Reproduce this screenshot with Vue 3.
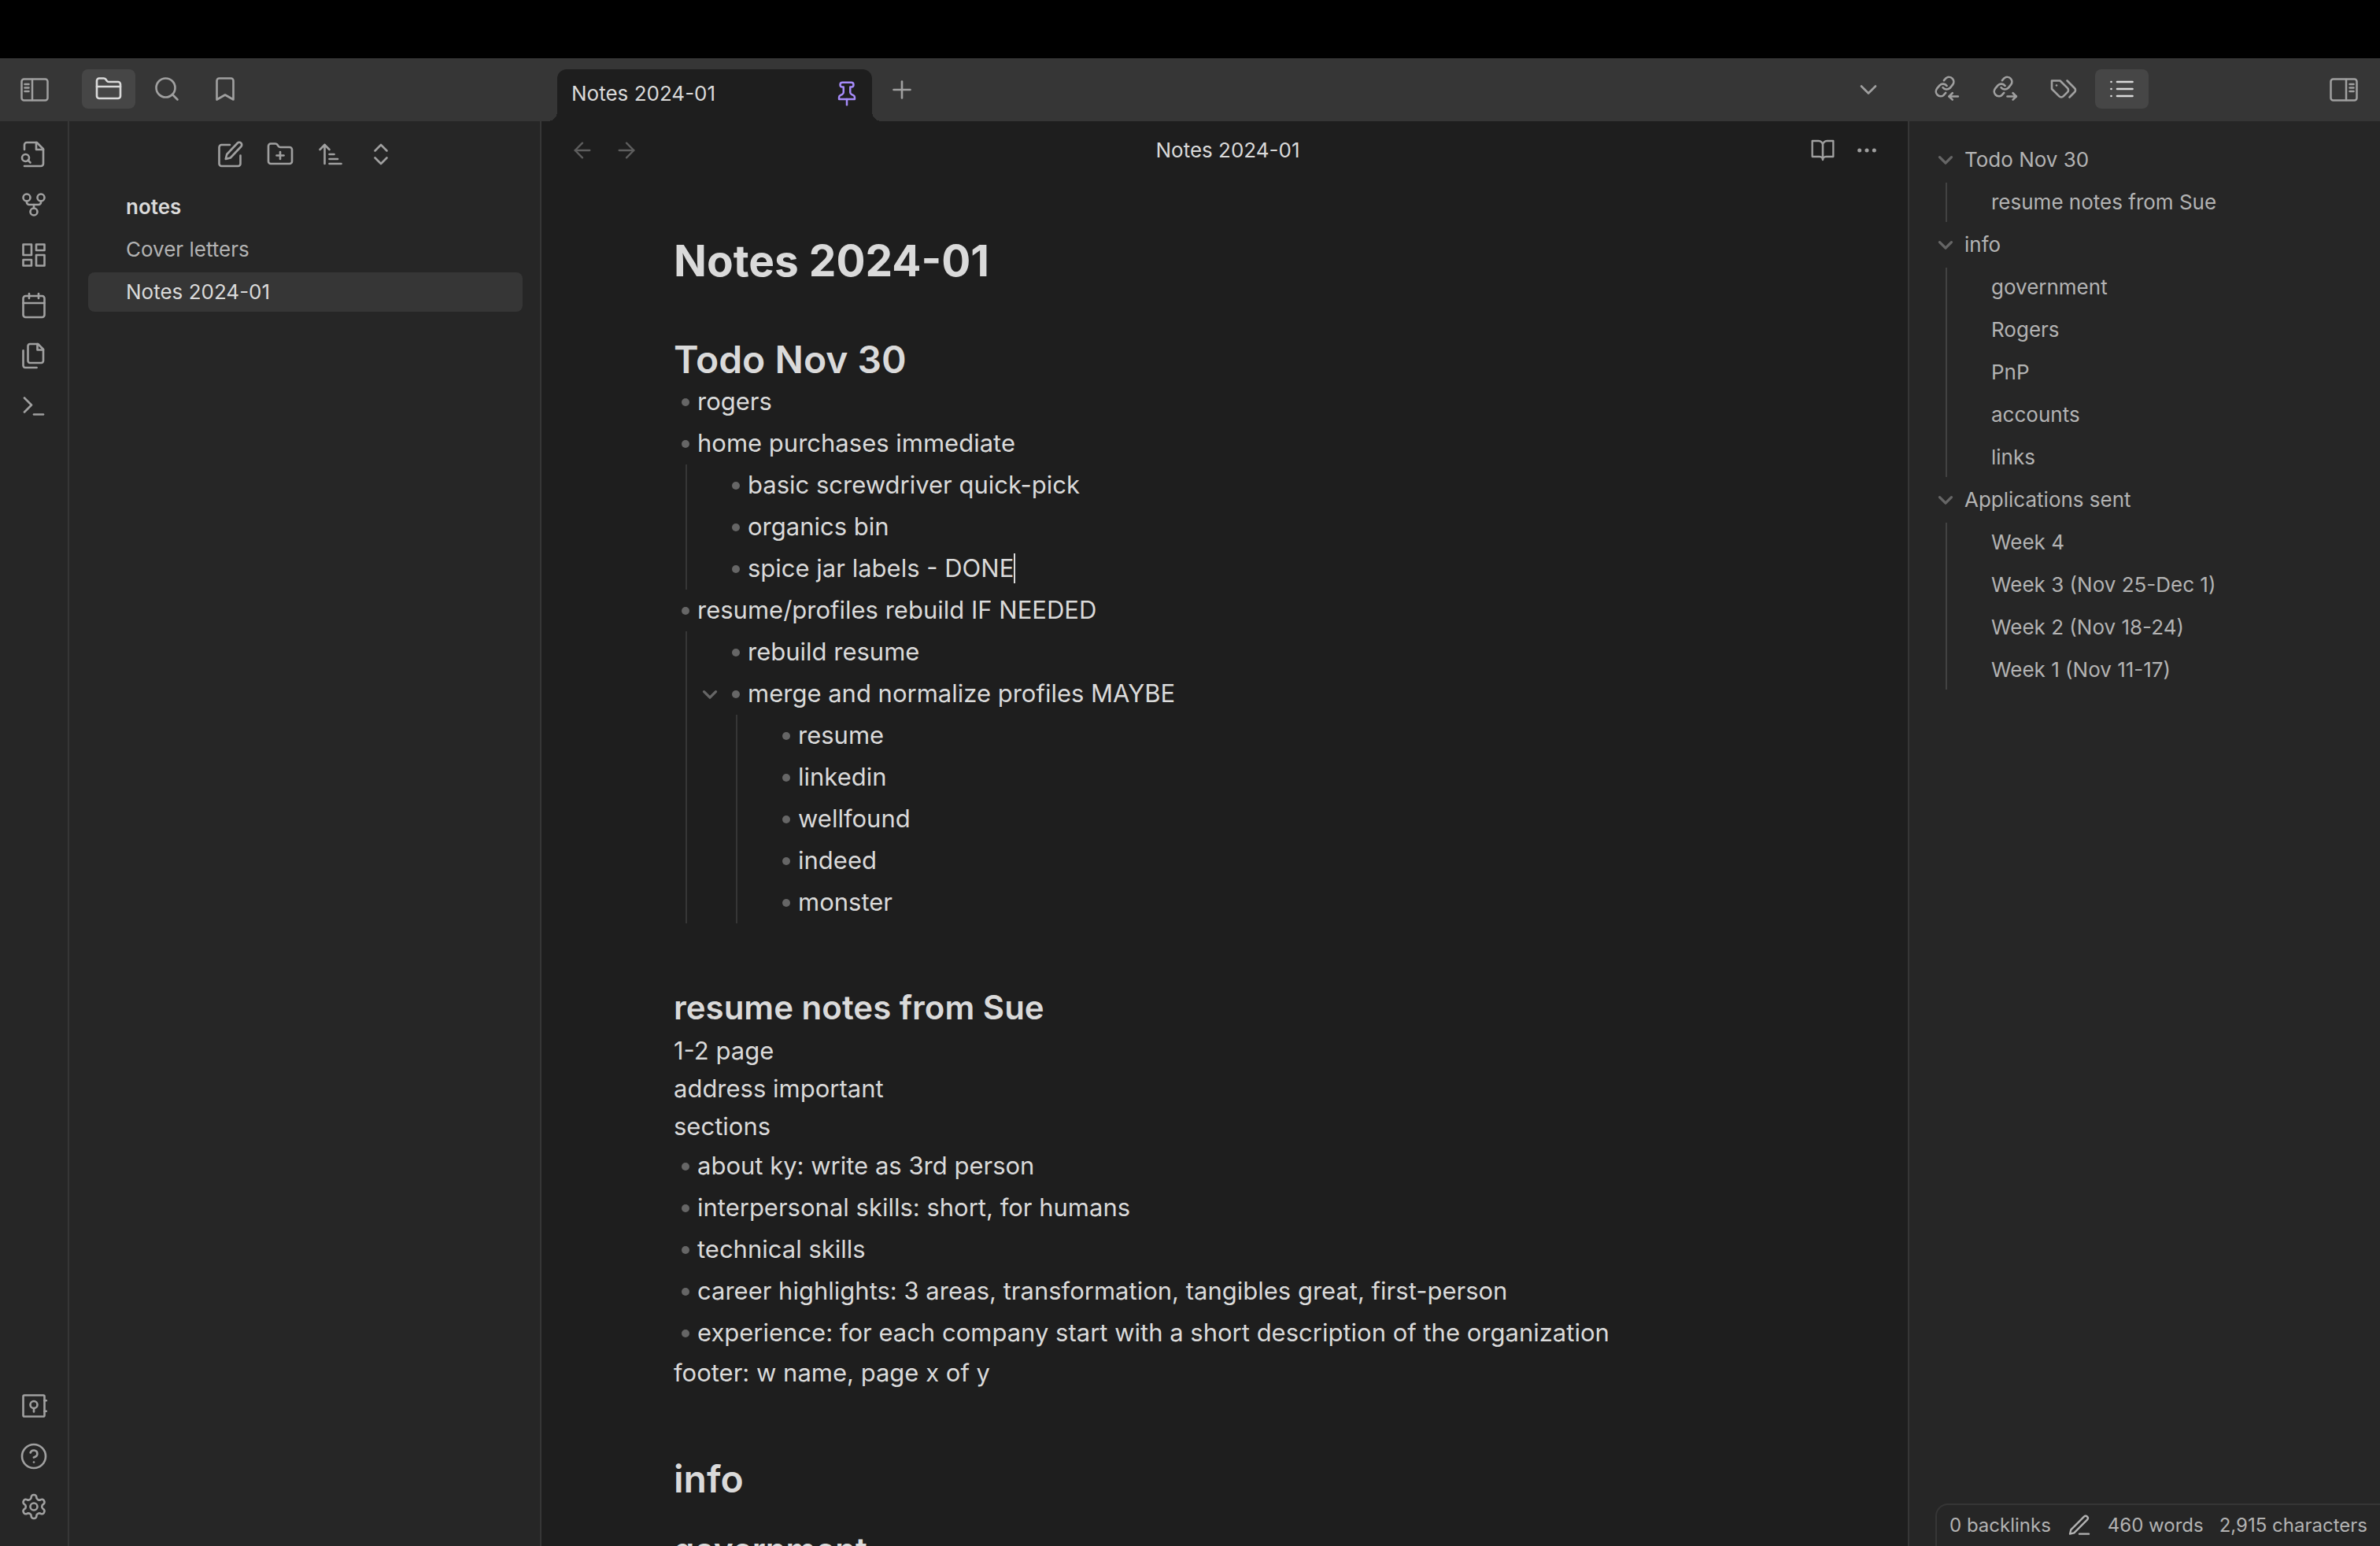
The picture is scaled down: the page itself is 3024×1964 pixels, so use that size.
<script setup>
import { h } from 'vue'

const paths = {
  folder: ['M20 20a2 2 0 0 0 2-2V8a2 2 0 0 0-2-2h-7.9a2 2 0 0 1-1.69-.9L9.6 3.9A2 2 0 0 0 7.93 3H4a2 2 0 0 0-2 2v13a2 2 0 0 0 2 2Z', 'M2 10h20'],
  search: ['M19 11a8 8 0 1 1-16 0a8 8 0 0 1 16 0Z', 'm21 21-4.3-4.3'],
  bookmark: ['m19 21-7-4-7 4V5a2 2 0 0 1 2-2h10a2 2 0 0 1 2 2v16z'],
  fileSearch: ['M4 8V4a2 2 0 0 1 2-2h8.5L20 7.5V20a2 2 0 0 1-2 2H4', 'M14 2v6h6', 'M8 15a3 3 0 1 1-6 0a3 3 0 0 1 6 0Z', 'm9 19-2-2'],
  fork: ['M15 18a3 3 0 1 1-6 0a3 3 0 0 1 6 0Z', 'M9 6a3 3 0 1 1-6 0a3 3 0 0 1 6 0Z', 'M21 6a3 3 0 1 1-6 0a3 3 0 0 1 6 0Z', 'M18 9v1a2 2 0 0 1-2 2H8a2 2 0 0 1-2-2V9', 'M12 12v3'],
  dashboard: ['M3 3h7v9H3z', 'M14 3h7v5h-7z', 'M14 12h7v9h-7z', 'M3 16h7v5H3z'],
  calendar: ['M5 4h14a2 2 0 0 1 2 2v14a2 2 0 0 1-2 2H5a2 2 0 0 1-2-2V6a2 2 0 0 1 2-2Z', 'M16 2v4', 'M8 2v4', 'M3 10h18'],
  files: ['M15.5 2H8.6c-.4 0-.8.2-1.1.5-.3.3-.5.7-.5 1.1v12.8c0 .4.2.8.5 1.1.3.3.7.5 1.1.5h9.8c.4 0 .8-.2 1.1-.5.3-.3.5-.7.5-1.1V6.5L15.5 2z', 'M3 7.6v12.8c0 .4.2.8.5 1.1.3.3.7.5 1.1.5h9.8', 'M15 2v5h5'],
  terminal: ['m4 17 6-6-6-6', 'M12 19h8'],
  vault: ['M4 3h16a1 1 0 0 1 1 1v16a1 1 0 0 1-1 1H4a1 1 0 0 1-1-1V4a1 1 0 0 1 1-1Z', 'M15 11a3 3 0 1 1-6 0a3 3 0 0 1 6 0Z', 'M12 14v3', 'M21 7.5h1.5', 'M21 16.5h1.5'],
  help: ['M22 12a10 10 0 1 1-20 0a10 10 0 0 1 20 0Z', 'M9.09 9a3 3 0 0 1 5.83 1c0 2-3 3-3 3', 'M12 17h.01'],
  edit: ['M12 4H5a2 2 0 0 0-2 2v14a2 2 0 0 0 2 2h14a2 2 0 0 0 2-2v-7', 'M18.5 2.5a2.12 2.12 0 0 1 3 3L12.5 15l-4 1 1-4Z'],
  folderPlus: ['M20 20a2 2 0 0 0 2-2V8a2 2 0 0 0-2-2h-7.9a2 2 0 0 1-1.69-.9L9.6 3.9A2 2 0 0 0 7.93 3H4a2 2 0 0 0-2 2v13a2 2 0 0 0 2 2Z', 'M12 10v6', 'M9 13h6'],
  sort: ['m3 8 4-4 4 4', 'M7 4v16', 'M11 12h4', 'M11 16h7', 'M11 20h10'],
  chevrons: ['m7 15 5 5 5-5', 'm7 9 5-5 5 5'],
  pin: ['M12 17v5', 'M5 17h14v-1.76a2 2 0 0 0-1.11-1.79l-1.78-.9A2 2 0 0 1 15 10.76V6h1a2 2 0 0 0 0-4H8a2 2 0 0 0 0 4h1v4.76a2 2 0 0 1-1.11 1.79l-1.78.9A2 2 0 0 0 5 15.24Z'],
  plus: ['M5 12h14', 'M12 5v14'],
  down: ['m6 9 6 6 6-6'],
  left: ['m12 19-7-7 7-7', 'M19 12H5'],
  right: ['M5 12h14', 'm12 5 7 7-7 7'],
  book: ['M2 3h6a4 4 0 0 1 4 4v14a3 3 0 0 0-3-3H2z', 'M22 3h-6a4 4 0 0 0-4 4v14a3 3 0 0 1 3-3h7z'],
  more: ['M13 12a1 1 0 1 1-2 0a1 1 0 0 1 2 0Z', 'M20 12a1 1 0 1 1-2 0a1 1 0 0 1 2 0Z', 'M6 12a1 1 0 1 1-2 0a1 1 0 0 1 2 0Z'],
  linkIn: ['M8.4 10.8a4 4 0 0 0 6 .4l2.4-2.9a4 4 0 0 0-5.7-5.5l-1.8 2', 'M11.7 9.3a4 4 0 0 0-6-.4l-2.4 2.9a4 4 0 0 0 5.7 5.5l1.8-2', 'M21.2 18.3h-7.5', 'm16.5 15.5-2.8 2.8 2.8 2.8'],
  linkOut: ['M8.4 10.8a4 4 0 0 0 6 .4l2.4-2.9a4 4 0 0 0-5.7-5.5l-1.8 2', 'M11.7 9.3a4 4 0 0 0-6-.4l-2.4 2.9a4 4 0 0 0 5.7 5.5l1.8-2', 'M13.7 18.3h7.5', 'm18.4 15.5 2.8 2.8-2.8 2.8'],
  tags: ['M9 5H2v7l6.29 6.29c.94.94 2.48.94 3.42 0l3.58-3.58c.94-.94.94-2.48 0-3.42L9 5Z', 'M6 9.01V9', 'm15 5 6.3 6.3a2.4 2.4 0 0 1 0 3.4L17 19'],
  list: ['M8 6h13', 'M8 12h13', 'M8 18h13', 'M3 6h.01', 'M3 12h.01', 'M3 18h.01'],
  pen: ['M12 20h9', 'M16.5 3.5a2.12 2.12 0 0 1 3 3L7 19l-4 1 1-4Z'],
  gear: ['M15 12a3 3 0 1 1-6 0a3 3 0 0 1 6 0Z', 'M12.22 2h-.44a2 2 0 0 0-2 2v.18a2 2 0 0 1-1 1.73l-.43.25a2 2 0 0 1-2 0l-.15-.08a2 2 0 0 0-2.73.73l-.22.38a2 2 0 0 0 .73 2.73l.15.1a2 2 0 0 1 1 1.72v.51a2 2 0 0 1-1 1.74l-.15.09a2 2 0 0 0-.73 2.73l.22.38a2 2 0 0 0 2.73.73l.15-.08a2 2 0 0 1 2 0l.43.25a2 2 0 0 1 1 1.73V20a2 2 0 0 0 2 2h.44a2 2 0 0 0 2-2v-.18a2 2 0 0 1 1-1.73l.43-.25a2 2 0 0 1 2 0l.15.08a2 2 0 0 0 2.73-.73l.22-.39a2 2 0 0 0-.73-2.73l-.15-.08a2 2 0 0 1-1-1.74v-.5a2 2 0 0 1 1-1.74l.15-.09a2 2 0 0 0 .73-2.73l-.22-.38a2 2 0 0 0-2.73-.73l-.15.08a2 2 0 0 1-2 0l-.43-.25a2 2 0 0 1-1-1.73V4a2 2 0 0 0-2-2z']
}

const Icon = ({ name, size = 36 }) =>
  h('svg', {
    width: size, height: size, viewBox: '0 0 24 24', fill: 'none', stroke: 'currentColor',
    'stroke-width': 1.75, 'stroke-linecap': 'round', 'stroke-linejoin': 'round', 'aria-hidden': 'true'
  }, paths[name].map(d => h('path', { d })))
Icon.props = ['name', 'size']

const Fold = () =>
  h('svg', {
    width: 20, height: 20, viewBox: '0 0 24 24', fill: 'none', stroke: 'currentColor',
    'stroke-width': 4, 'stroke-linecap': 'round', 'stroke-linejoin': 'round', 'aria-hidden': 'true'
  }, [h('path', { d: 'M3 8L12 17L21 8' })])

const ribbonTop = [
  ['fileSearch', 'Open quick switcher'], ['fork', 'Open graph view'], ['dashboard', 'Create new canvas'],
  ['calendar', "Open today's daily note"], ['files', 'Insert template'], ['terminal', 'Open command palette']
]
const ribbonBottom = [['vault', 'Open another vault'], ['help', 'Help'], ['gear', 'Settings']]
const leftTabs = [['folder', 'Files'], ['search', 'Search'], ['bookmark', 'Bookmarks']]
const rightTabs = [['linkIn', 'Backlinks'], ['linkOut', 'Outgoing links'], ['tags', 'Tags'], ['list', 'Outline']]
const fileActions = [['edit', 'New note'], ['folderPlus', 'New folder'], ['sort', 'Change sort order'], ['chevrons', 'Expand all']]
const files = ['Cover letters', 'Notes 2024-01']
const outline = [
  { title: 'Todo Nov 30', items: ['resume notes from Sue'] },
  { title: 'info', items: ['government', 'Rogers', 'PnP', 'accounts', 'links'] },
  { title: 'Applications sent', items: ['Week 4', 'Week 3 (Nov 25-Dec 1)', 'Week 2 (Nov 18-24)', 'Week 1 (Nov 11-17)'] }
]
const errands = ['basic screwdriver quick-pick', 'organics bin', 'spice jar labels - DONE']
const profiles = ['resume', 'linkedin', 'wellfound', 'indeed', 'monster']
const sections = [
  'about ky: write as 3rd person',
  'interpersonal skills: short, for humans',
  'technical skills',
  'career highlights: 3 areas, transformation, tangibles great, first-person',
  'experience: for each company start with a short description of the organization'
]
</script>

<template>
  <div class="app">
    <div class="notch"></div>

    <header class="titlebar">
      <div class="bar-left">
        <button class="toggle" aria-label="Collapse left sidebar">
          <svg width="36" height="30" viewBox="0 0 36 30" fill="none" stroke="currentColor" stroke-width="2.5" stroke-linecap="round">
            <rect x="1.5" y="1.5" width="33" height="27" rx="3" />
            <path d="M15 2v26M5.5 8h5M5.5 12.5h5M5.5 17h5" />
          </svg>
        </button>
        <nav class="bar-tabs">
          <button v-for="([icon, label], i) in leftTabs" :key="icon" class="bar-tab" :class="{ active: i === 0 }" :aria-label="label">
            <Icon :name="icon" />
          </button>
        </nav>
      </div>
      <div class="bar-main">
        <div class="note-tab">
          <span>Notes 2024-01</span>
          <button class="pin" aria-label="Unpin"><Icon name="pin" :size="34" /></button>
        </div>
        <button class="new-tab" aria-label="New tab"><Icon name="plus" /></button>
        <button class="tab-list" aria-label="Tab list"><Icon name="down" /></button>
      </div>
      <div class="bar-right">
        <nav class="bar-tabs">
          <button v-for="([icon, label], i) in rightTabs" :key="icon" class="bar-tab" :class="{ active: i === 3 }" :aria-label="label">
            <Icon :name="icon" />
          </button>
        </nav>
        <button class="toggle" aria-label="Collapse right sidebar">
          <svg width="36" height="30" viewBox="0 0 36 30" fill="none" stroke="currentColor" stroke-width="2.5" stroke-linecap="round">
            <rect x="1.5" y="1.5" width="33" height="27" rx="3" />
            <path d="M21 2v26M25.5 8h5M25.5 12.5h5M25.5 17h5" />
          </svg>
        </button>
      </div>
    </header>

    <div class="workspace">
      <aside class="ribbon">
        <div class="ribbon-group">
          <button v-for="[icon, label] in ribbonTop" :key="icon" :aria-label="label"><Icon :name="icon" /></button>
        </div>
        <div class="ribbon-group">
          <button v-for="[icon, label] in ribbonBottom" :key="icon" :aria-label="label"><Icon :name="icon" /></button>
        </div>
      </aside>

      <aside class="explorer">
        <div class="explorer-actions">
          <button v-for="[icon, label] in fileActions" :key="icon" :aria-label="label"><Icon :name="icon" /></button>
        </div>
        <div class="vault-name">notes</div>
        <a v-for="(file, i) in files" :key="file" href="#" class="file" :class="{ active: i === 1 }">{{ file }}</a>
      </aside>

      <main class="note">
        <div class="note-header">
          <div class="header-actions faint">
            <button aria-label="Back"><Icon name="left" :size="32" /></button>
            <button aria-label="Forward"><Icon name="right" :size="32" /></button>
          </div>
          <div class="note-title">Notes 2024-01</div>
          <div class="header-actions">
            <button aria-label="Reading view"><Icon name="book" :size="32" /></button>
            <button aria-label="More options"><Icon name="more" :size="32" /></button>
          </div>
        </div>

        <article class="editor">
          <h1>Notes 2024-01</h1>
          <h2>Todo Nov 30</h2>
          <ul>
            <li><div class="line">rogers</div></li>
            <li>
              <div class="line">home purchases immediate</div>
              <ul>
                <li v-for="(item, i) in errands" :key="item">
                  <div class="line">{{ item }}<span v-if="i === 2" class="caret"></span></div>
                </li>
              </ul>
            </li>
            <li>
              <div class="line">resume/profiles rebuild IF NEEDED</div>
              <ul>
                <li><div class="line">rebuild resume</div></li>
                <li>
                  <div class="line"><button class="fold" aria-label="Fold"><Fold /></button>merge and normalize profiles MAYBE</div>
                  <ul>
                    <li v-for="item in profiles" :key="item"><div class="line">{{ item }}</div></li>
                  </ul>
                </li>
              </ul>
            </li>
          </ul>
          <h3>resume notes from Sue</h3>
          <p>1-2 page</p>
          <p>address important</p>
          <p>sections</p>
          <ul>
            <li v-for="item in sections" :key="item"><div class="line">{{ item }}</div></li>
          </ul>
          <p>footer: w name, page x of y</p>
          <h2 class="later">info</h2>
          <h3 class="sub">government</h3>
        </article>
      </main>

      <aside class="outline">
        <section v-for="group in outline" :key="group.title" class="group">
          <a href="#" class="heading"><Fold />{{ group.title }}</a>
          <div class="children">
            <a v-for="item in group.items" :key="item" href="#">{{ item }}</a>
          </div>
        </section>
      </aside>
    </div>

    <footer class="status">
      <span>0 backlinks</span>
      <button aria-label="Editing mode"><Icon name="pen" :size="32" /></button>
      <span>460 words</span>
      <span class="chars">2,915 characters</span>
    </footer>
  </div>
</template>

<style>
body {
  margin: 0;
  background: #1e1e1e;
}
</style>

<style scoped>
.app {
  position: relative;
  display: flex;
  flex-direction: column;
  height: 100vh;
  overflow: hidden;
  background: #1e1e1e;
  color: #dadada;
  font: 26px/34px Inter, "Liberation Sans", sans-serif;
}
button {
  display: flex;
  align-items: center;
  justify-content: center;
  padding: 0;
  border: 0;
  background: none;
  color: inherit;
}
a {
  color: inherit;
  text-decoration: none;
}
svg {
  display: block;
  flex: none;
}
.notch {
  flex: none;
  height: 74px;
  background: #000;
}
.titlebar {
  display: flex;
  flex: none;
  height: 80px;
  background: #363636;
  color: #a0a0a0;
}
.bar-left,
.bar-right {
  display: flex;
  flex: none;
  align-items: center;
  box-sizing: border-box;
}
.bar-left {
  width: 688px;
  padding-left: 26px;
  gap: 42px;
}
.bar-right {
  width: 600px;
  padding: 0 28px 0 16px;
  justify-content: space-between;
}
.bar-tabs {
  display: flex;
  gap: 6px;
  padding-bottom: 2px;
}
.bar-tab {
  width: 68px;
  height: 50px;
  border-radius: 8px;
}
.bar-tab.active {
  background: #464646;
  color: #dadada;
}
.bar-main {
  display: flex;
  flex: 1;
  align-items: center;
  padding: 0 32px 0 20px;
}
.note-tab {
  position: relative;
  display: flex;
  align-items: center;
  justify-content: space-between;
  align-self: flex-end;
  box-sizing: border-box;
  width: 400px;
  height: 66px;
  padding: 0 15px 4px 18px;
  border-radius: 12px 12px 0 0;
  background: #1e1e1e;
  color: #dadada;
}
.note-tab::before,
.note-tab::after {
  content: "";
  position: absolute;
  bottom: 0;
  width: 12px;
  height: 12px;
}
.note-tab::before {
  right: 100%;
  background: radial-gradient(circle at 0 0, transparent 12px, #1e1e1e 12px);
}
.note-tab::after {
  left: 100%;
  background: radial-gradient(circle at 100% 0, transparent 12px, #1e1e1e 12px);
}
.pin {
  color: #a68bfa;
}
.new-tab {
  margin-left: 20px;
}
.tab-list {
  margin-left: auto;
}
.workspace {
  display: flex;
  flex: 1;
  min-height: 0;
}
.ribbon {
  display: flex;
  flex: none;
  flex-direction: column;
  justify-content: space-between;
  box-sizing: border-box;
  width: 88px;
  padding: 10px 0 18px;
  border-right: 2px solid #363636;
  background: #262626;
  color: #a0a0a0;
}
.ribbon-group button {
  width: 100%;
  height: 64px;
}
.explorer {
  flex: none;
  box-sizing: border-box;
  width: 600px;
  padding: 16px 22px 0 24px;
  border-right: 2px solid #363636;
  background: #262626;
  color: #b3b3b3;
}
.explorer-actions {
  display: flex;
  justify-content: center;
  gap: 12px;
  margin-bottom: 16px;
  color: #a0a0a0;
}
.explorer-actions button {
  width: 52px;
  height: 52px;
}
.vault-name,
.file {
  display: block;
  margin-bottom: 4px;
  padding: 8px 48px;
  border-radius: 8px;
}
.vault-name {
  color: #dadada;
  font-weight: 600;
}
.file.active {
  background: #363636;
  color: #dadada;
}
.note {
  flex: 1;
  min-width: 0;
  overflow: hidden;
}
.note-header {
  display: flex;
  align-items: center;
  justify-content: space-between;
  height: 74px;
  padding: 0 36px;
}
.note-title {
  padding-left: 8px;
}
.header-actions {
  display: flex;
  gap: 24px;
  color: #a0a0a0;
}
.header-actions.faint {
  color: #5e5e5e;
}
.editor {
  max-width: 1400px;
  margin: 0 auto;
  padding-top: 68px;
  font-size: 31px;
  line-height: 48px;
}
h1,
h2,
h3,
p {
  margin: 0;
}
h1 {
  margin-bottom: 64px;
  font-size: 55px;
  line-height: 70px;
}
h2 {
  font-size: 48px;
  font-weight: 600;
  line-height: 54px;
}
h3 {
  margin-top: 76px;
  font-size: 42px;
  font-weight: 600;
  line-height: 62px;
}
.later {
  margin-top: 84px;
}
.sub {
  margin-top: 32px;
}
ul {
  margin: 0;
  padding: 0;
  list-style: none;
}
li ul {
  margin-left: 15px;
  padding-left: 47px;
  border-left: 2px solid #363636;
  box-sizing: border-box;
}
.line {
  position: relative;
  display: flex;
  align-items: center;
  padding: 2px 0 3px 30px;
}
.line::before {
  content: "";
  position: absolute;
  left: 10px;
  top: 22px;
  width: 10px;
  height: 10px;
  border-radius: 5px;
  background: #666;
}
.caret {
  width: 2px;
  height: 38px;
  background: #dadada;
}
.fold {
  position: absolute;
  left: -28px;
  top: 17px;
  color: #666;
}
.outline {
  flex: none;
  box-sizing: border-box;
  width: 600px;
  padding: 24px 24px 0 36px;
  border-left: 2px solid #363636;
  background: #262626;
  color: #b3b3b3;
}
.heading {
  display: flex;
  align-items: center;
  gap: 14px;
  padding: 8px 0;
}
.heading svg {
  color: #666;
}
.children {
  display: flex;
  flex-direction: column;
  gap: 4px;
  margin: 4px 0 4px 10px;
  border-left: 2px solid #424242;
}
.children a {
  padding: 8px 0 8px 56px;
}
.status {
  position: absolute;
  right: 0;
  bottom: 0;
  display: flex;
  align-items: center;
  box-sizing: border-box;
  height: 54px;
  padding: 0 16px;
  border: 2px solid #363636;
  border-width: 2px 0 0 2px;
  border-radius: 16px 0 0 0;
  background: #262626;
  color: #b3b3b3;
  font-size: 24px;
  line-height: 32px;
}
.status button {
  margin: 0 20px;
}
.chars {
  margin-left: 20px;
}
</style>
